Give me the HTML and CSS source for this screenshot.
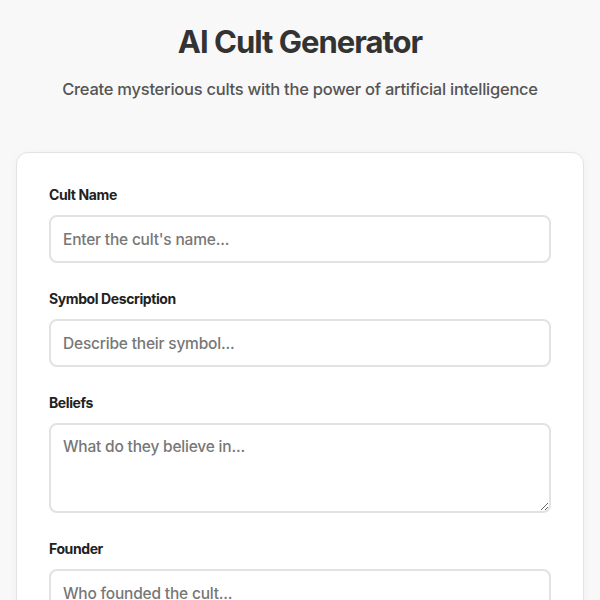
FILE: index.html
```html
<!DOCTYPE html>
<html lang="en">
<head>
    <meta charset="UTF-8">
    <meta name="viewport" content="width=device-width, initial-scale=1.0">
    <title>AI Cult Generator</title>
    <link rel="stylesheet" href="styles.css">
</head>
<body>
    <!-- Header -->
    <header class="page-header">
        <h1>AI Cult Generator</h1>
        <p class="subtitle">Create mysterious cults with the power of artificial intelligence</p>
    </header>

    <!-- Form card -->
    <form class="cult-form" onsubmit="return false;">
        <div class="form-group">
            <label for="cultName">Cult Name</label>
            <input type="text" id="cultName" placeholder="Enter the cult's name...">
        </div>
        <div class="form-group">
            <label for="symbol">Symbol Description</label>
            <input type="text" id="symbol" placeholder="Describe their symbol...">
        </div>
        <div class="form-group">
            <label for="beliefs">Beliefs</label>
            <textarea id="beliefs" placeholder="What do they believe in..."></textarea>
        </div>
        <div class="form-group">
            <label for="founder">Founder</label>
            <input type="text" id="founder" placeholder="Who founded the cult...">
        </div>
        <button type="submit">Generate Cult</button>
    </form>
</body>
</html>
```

FILE: styles.css
```css
/* Global Styles */
body, html {
    margin: 0;
    padding: 0;
    font-family: 'Inter', 'Noto Sans', sans-serif;
    background: #f8f8f8;
    color: #333;
}

body {
    padding: 0 16px;
}

/* Header */
.page-header {
    text-align: center;
    padding-top: 22px;
}

h1 {
    margin: 0;
    font-size: 31px;
    line-height: 40px;
    font-weight: 700;
    letter-spacing: -1px;
    color: #333;
}

.subtitle {
    margin: 16px 0 0;
    font-size: 16.5px;
    line-height: 22px;
    font-weight: 500;
    letter-spacing: -0.25px;
    color: #555;
}

/* Form Card */
.cult-form {
    margin-top: 52px;
    background: #ffffff;
    border: 1px solid #e3e3e3;
    border-radius: 12px;
    padding: 32px;
    box-shadow: 0 2px 10px rgba(0, 0, 0, 0.04);
}

.form-group {
    margin-bottom: 26px;
}

label {
    display: block;
    font-size: 14px;
    line-height: 20px;
    font-weight: 700;
    letter-spacing: -0.4px;
    color: #222;
    margin-bottom: 10px;
}

input, textarea {
    display: block;
    box-sizing: border-box;
    width: 100%;
    height: 48px;
    padding: 12px;
    font-family: inherit;
    font-size: 15.5px;
    letter-spacing: -0.2px;
    color: #333;
    background: #fff;
    border: 2px solid #e2e2e2;
    border-radius: 8px;
    outline: none;
}

textarea {
    height: 90px;
    resize: vertical;
}

input::placeholder, textarea::placeholder {
    color: #777;
    font-weight: 500;
}

button {
    width: 100%;
    padding: 14px;
    font-family: inherit;
    font-size: 16px;
    font-weight: 700;
    color: #fff;
    background: #333;
    border: none;
    border-radius: 8px;
    cursor: pointer;
}
```
